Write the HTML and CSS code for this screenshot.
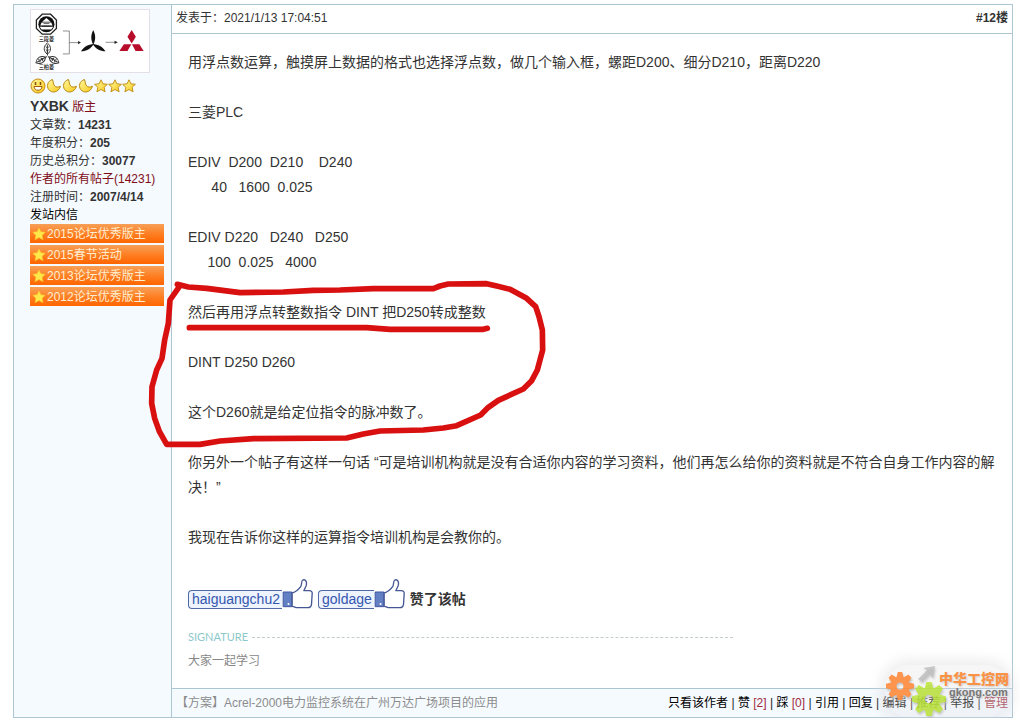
FILE: index.html
```html
<!DOCTYPE html>
<html lang="zh-CN">
<head>
<meta charset="utf-8">
<title>论坛帖子</title>
<link rel="stylesheet" href="styles.css">
</head>
<body>
<svg class="defs" width="0" height="0" aria-hidden="true">
  <defs>
    <linearGradient id="gold" x1="0" y1="0" x2="1" y2="1"><stop offset="0" stop-color="#fff9a0"/><stop offset="1" stop-color="#f7c818"/></linearGradient>
    <symbol id="star" viewBox="0 0 14 14"><path d="M7 .8 8.900 4.800l4.500.5-3.300 3 1 4.500L7 10.500l-4.100 2.300 1-4.500-3.300-3 4.500-.5z" fill="url(#gold)" stroke="#c2921a" stroke-linejoin="round"/></symbol>
    <symbol id="medal" viewBox="0 0 14 14"><path d="M7 1 8.900 4.800l4.300.5-3.100 3 .9 4.400L7 10.500l-4 2.200.9-4.400-3.100-3 4.300-.5z" fill="#ffe94a" stroke="#ffc52a" stroke-width=".6" stroke-linejoin="round"/></symbol>
    <symbol id="moon" viewBox="0 0 16 16"><path d="M6.500 1.500C1.500 3 .3 8.300 2.700 11.600c3 3.800 9.600 3.400 11.800-3.300-2.500 1.200-4.600 1-5.800-.4C7.200 6.200 7.400 3.800 6.500 1.500z" fill="url(#gold)" stroke="#b98a12" stroke-linejoin="round"/></symbol>
    <symbol id="thumb" viewBox="0 0 92 90">
      <path d="M3 39h26v44H3z" fill="#6480c4" stroke="#3f55a0" stroke-width="3"/>
      <circle cx="19" cy="75" r="3" fill="#fff"/>
      <path d="M30 42c9-3 19-10 26-20 3-4 1-17 6-19 9-3 13 6 10 17l-7 15h16c7 0 10 4 9 10l-2 31c-1 7-4 10-11 10H45c-6 0-8-4-15-4z" fill="#fff" stroke="#465894" stroke-width="4" stroke-linejoin="round"/>
    </symbol>
    <symbol id="gear" viewBox="0 0 32 32">
      <g fill="currentColor"><path id="teeth" d="M13.500 0h5l2 8h-9zM11.500 24h9l-2 8h-5z"/><use href="#teeth" transform="rotate(45 16 16)"/><use href="#teeth" transform="rotate(90 16 16)"/><use href="#teeth" transform="rotate(135 16 16)"/></g>
      <circle cx="16" cy="16" r="7.500" fill="none" stroke="currentColor" stroke-width="7"/>
    </symbol>
  </defs>
</svg>
<article class="post">
  <aside class="author">
    <svg class="avatar" viewBox="0 0 360 192" role="img" aria-label="三菱标志演变">
      <path d="M32 13h26l18 18v26L58 75H32L14 57V31z" fill="#fff" stroke="#222" stroke-width="4"/>
      <circle cx="45" cy="44" r="25" fill="#111"/>
      <path d="M45 25 58 36H32zM30 39h30l4 9H26zM24 52h42l-6 8H30z" fill="#fff"/>
      <path d="M36 42h18M32 50h26" stroke="#111" stroke-width="2"/>
      <g fill="#fff" stroke="#333" stroke-width="3">
        <path id="leaf" d="M48 141V126M48 137c-13-10-13-24 0-35 13 11 13 25 0 35zM48 107v25M43 113l5 5 5-5M43 122l5 5 5-5"/>
        <use href="#leaf" transform="rotate(120 48 143)"/><use href="#leaf" transform="rotate(240 48 143)"/>
      </g>
      <text x="45" y="96" class="avatar-text">三段菱</text>
      <text x="45" y="182" class="avatar-text">三柏菱</text>
      <path d="M96 65h20v71H96M116 101h28M228 100h30" fill="none" stroke="#555" stroke-width="2"/>
      <path d="m143 96 9 5-9 5zM256 95l10 5-10 5z" fill="#222"/>
      <g fill="#111"><path id="blade" d="M190 108c-8-16-8-30 0-46 8 16 8 30 0 46z"/><use href="#blade" transform="rotate(120 190 106)"/><use href="#blade" transform="rotate(240 190 106)"/></g>
      <path d="m309 62 13 21-13 21-13-21zM285 106h23l-12 21h-25zM310 106h23l13 21h-25z" fill="#b80c2b"/>
    </svg>
    <div class="rank">
      <svg width="16" height="16" viewBox="0 0 16 16"><circle cx="8" cy="8" r="7" fill="url(#gold)" stroke="#c68a10"/><path d="M4 8.500h8c0 5-8 5-8 0z" fill="#fff" stroke="#a26008"/><path d="M5.500 4v3M10.500 4v3" stroke="#86500c" stroke-width="1.500"/></svg>
      <svg width="16" height="16"><use href="#moon"/></svg><svg width="16" height="16"><use href="#moon"/></svg><svg width="16" height="16"><use href="#moon"/></svg>
      <svg width="14" height="14"><use href="#star"/></svg><svg width="14" height="14"><use href="#star"/></svg><svg width="14" height="14"><use href="#star"/></svg>
    </div>
    <div><b class="name">YXBK</b> <span class="role">版主</span></div>
    <div>文章数：<b>14231</b></div>
    <div>年度积分：<b>205</b></div>
    <div>历史总积分：<b>30077</b></div>
    <div><a class="role" href="#posts">作者的所有帖子(14231)</a></div>
    <div>注册时间：<b>2007/4/14</b></div>
    <div><a class="message" href="#message">发站内信</a></div>
    <ul class="medals">
      <li><svg width="14" height="14"><use href="#medal"/></svg>2015论坛优秀版主</li>
      <li><svg width="14" height="14"><use href="#medal"/></svg>2015春节活动</li>
      <li><svg width="14" height="14"><use href="#medal"/></svg>2013论坛优秀版主</li>
      <li><svg width="14" height="14"><use href="#medal"/></svg>2012论坛优秀版主</li>
    </ul>
  </aside>
  <div class="main">
    <header class="head"><span>发表于：<time>2021/1/13 17:04:51</time></span><b>#12楼</b></header>
    <div class="content">
      <div class="text">用浮点数运算，触摸屏上数据的格式也选择浮点数，做几个输入框，螺距D200、细分D210，距离D220

三菱PLC

EDIV  D200  D210    D240
      40   1600  0.025

EDIV D220   D240   D250
     100  0.025   4000

然后再用浮点转整数指令 DINT 把D250转成整数

DINT D250 D260

这个D260就是给定位指令的脉冲数了。

你另外一个帖子有这样一句话 “可是培训机构就是没有合适你内容的学习资料，他们再怎么给你的资料就是不符合自身工作内容的解决！”

我现在告诉你这样的运算指令培训机构是会教你的。</div>
      <div class="likes">
        <span class="like"><a href="#haiguangchu2">haiguangchu2</a><svg width="31" height="30"><use href="#thumb"/></svg></span>
        <span class="like"><a href="#goldage">goldage</a><svg width="31" height="30"><use href="#thumb"/></svg></span>
        <b>赞了该帖</b>
      </div>
      <div class="sign-head">SIGNATURE</div>
      <div class="sign">大家一起学习</div>
    </div>
    <footer class="foot">
      <a class="ad" href="#case">【方案】Acrel-2000电力监控系统在广州万达广场项目的应用</a>
      <nav><a href="#only">只看该作者</a> | <a href="#up">赞</a> <span class="red">[2]</span> | <a href="#down">踩</a> <span class="red">[0]</span> | <a href="#quote">引用</a> | <a href="#reply">回复</a> | <a href="#edit">编辑</a> | <a href="#rec">推荐</a> | <a href="#report">举报</a> | <a class="red" href="#manage">管理</a></nav>
    </footer>
  </div>
  <svg class="marker" viewBox="0 0 1260 570" aria-hidden="true">
    <path d="M112 43 145 51 200 55 300 68 430 66 520 61 600 60 700 56 880 56 900 48 925 42 1040 41 1070 48 1110 58 1160 85 1187 110 1197 140 1207 180 1208 240 1192 300 1175 332 1150 357 1075 391 1045 412 1022 435 950 467 910 474 850 480 720 483 670 492 620 504 340 506 240 513 180 523H80L58 484 44 445 35 400 36 350 50 300 66 265 74 210 85 160 90 90 118 50"/>
    <path d="M148 173H680L750 178H1030L1042 175"/>
  </svg>
  <div class="watermark">
    <svg class="gears" viewBox="0 0 62 52" aria-hidden="true">
      <path d="m33 14 9-9-4-2 12-2-2 12-3-4-8 8z" fill="#b8b8b8" opacity=".8"/>
      <svg class="orange" x="1" y="7" width="28" height="28"><use href="#gear"/></svg>
      <svg class="lime" x="27" y="17" width="34" height="34" opacity=".85"><use href="#gear"/></svg>
    </svg>
    <div class="brand"><b>中华工控网</b><span>gkong.com</span></div>
  </div>
</article>
</body>
</html>
```
FILE: styles.css
```css
body {
  margin: 0;
  background: #fff;
  color: #333;
  font: 12px/18px "Liberation Sans", "Noto Sans CJK SC", sans-serif;
}
a { color: inherit; text-decoration: none; }
.defs { position: absolute; }
.post {
  position: relative;
  display: grid;
  grid-template-columns: 158px minmax(0, 1fr);
  margin: 4px 7px 0 13px;
  border: 1px solid #adc6d4;
}
.author {
  padding: 4px 7px 0 16px;
  background: #f5faff;
  border-right: 1px solid #adc6d4;
}
.avatar {
  display: block;
  box-sizing: border-box;
  width: 120px;
  height: 64px;
  background: #fff;
  border: 1px solid #e6dfea;
}
.avatar-text { font-size: 16px; font-weight: bold; text-anchor: middle; fill: #333; }
.rank { display: flex; align-items: center; height: 16px; margin: 5px 0 3px; }
.name { font-size: 14px; }
.role { color: #800c16; }
.message { color: #000; }
.medals {
  display: grid;
  gap: 2px;
  margin: 0;
  padding: 0;
  list-style: none;
}
.medals li {
  display: flex;
  align-items: center;
  gap: 1px;
  height: 19px;
  padding-left: 2px;
  background: linear-gradient(#f7a057, #ff7a1c 60%, #ff6500);
  color: #ffedd0;
}
.main { display: flex; flex-direction: column; }
.head {
  display: flex;
  justify-content: space-between;
  padding: 4px 4px 6px;
  border-bottom: 1px solid #adc6d4;
}
.content { flex: 1; padding: 16px 16px 18px; }
.text { font-size: 14px; line-height: 25px; white-space: pre-wrap; }
.likes {
  display: flex;
  align-items: flex-end;
  gap: 5px;
  height: 30px;
  margin-top: 29px;
  font-size: 14px;
  line-height: 20px;
}
.like { display: flex; align-items: flex-end; }
.like a {
  padding: 0 2px 0 3px;
  border: 1px solid #5068a4;
  border-right: 0;
  border-radius: 4px 0 0 4px;
  background: #edf3ff;
  color: #3557ad;
  line-height: 17px;
}
.sign-head {
  display: flex;
  align-items: center;
  gap: 4px;
  max-width: 545px;
  margin-top: 20px;
  color: #8cc8cb;
  font: 11px/16px Lato, sans-serif;
}
.sign-head::after { content: ""; flex: 1; border-top: 1px dashed #c3cccc; }
.sign { margin-top: 7px; color: #888; }
.foot {
  display: flex;
  justify-content: space-between;
  padding: 5px 4px;
  border-top: 1px solid #adc6d4;
  background: #f5faff;
  color: #222;
}
.foot nav a { color: #000; }
.ad { color: #8c8c8c; }
.red, .foot nav a.red { color: #a02c3c; }
.marker {
  position: absolute;
  top: 265px;
  left: 126px;
  width: 420px;
  height: 190px;
  fill: none;
  stroke: #d91010;
  stroke-width: 17px;
  stroke-linejoin: round;
  stroke-linecap: round;
  pointer-events: none;
}
.watermark {
  position: absolute;
  right: 3px;
  bottom: 0;
  display: flex;
  align-items: flex-start;
  border-radius: 24px;
  background: rgba(225, 225, 225, .3);
  box-shadow: 0 0 12px 6px rgba(215, 215, 215, .4);
  pointer-events: none;
}
.gears { width: 62px; height: 52px; filter: drop-shadow(1px 2px 1px #bbb); opacity: .9; }
.orange { color: #ff8b3d; }
.lime { color: #b9e62a; }
.brand {
  display: grid;
  margin-left: -8px;
  padding-top: 7px;
  font-size: 14px;
  line-height: 14px;
  text-shadow: 1px 1px 2px #ccc;
}
.brand b { color: #fb9346; font-weight: 900; }
.brand span { padding-left: 10px; color: #777; font-size: 11px; line-height: 12px; font-weight: bold; }
```
